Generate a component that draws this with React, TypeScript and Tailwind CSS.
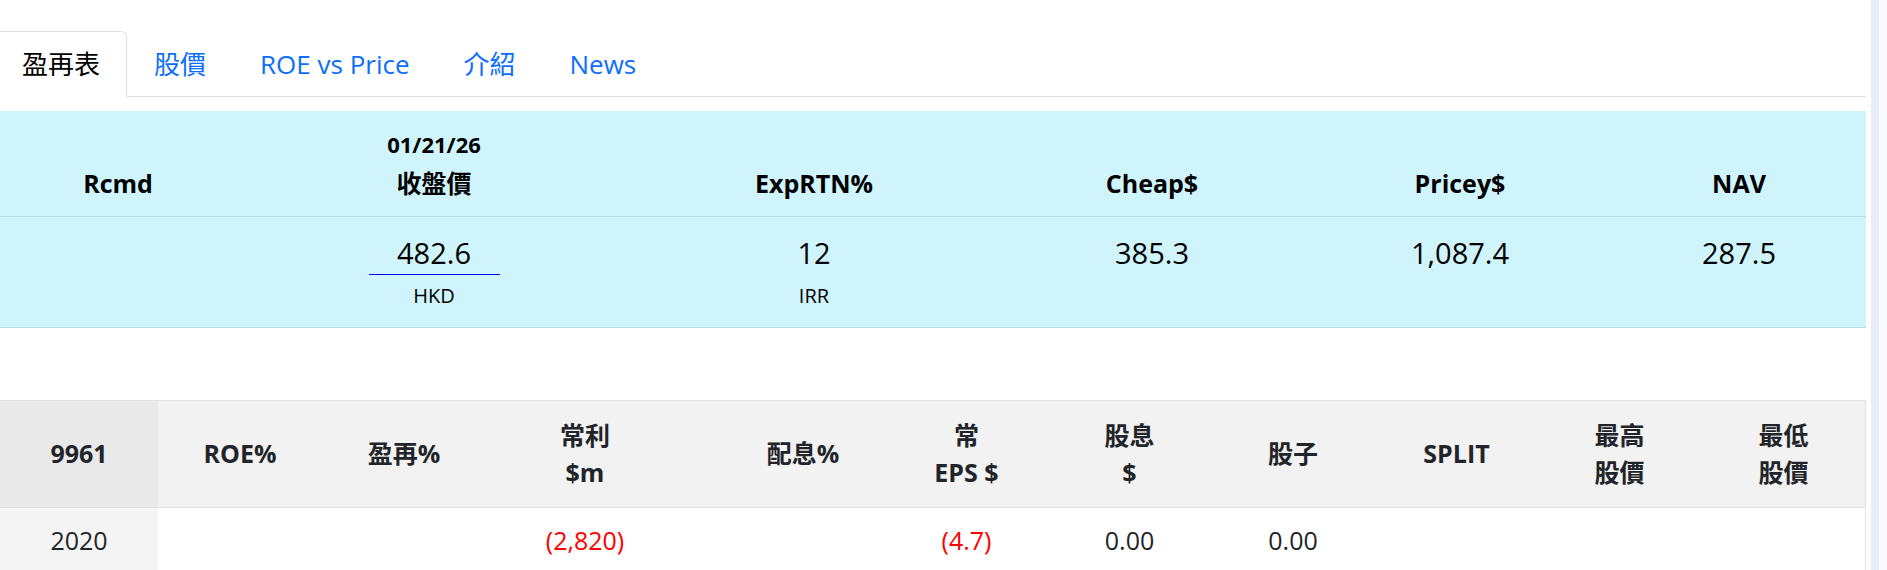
import React from "react";

// ── 상수 ──────────────────────────────────────────────────────────
const TABS = ["盈再表", "股價", "ROE vs Price", "介紹", "News"] as const;

type Col = { head: string[]; cls: string; value?: string; red?: boolean };

const HIST_COLS: Col[] = [
  { head: ["9961"], cls: "bg-[#e9e9e9]", value: "2020" },
  { head: ["ROE%"], cls: "" },
  { head: ["盈再%"], cls: "pr-[8px]" },
  { head: ["常利", "$m"], cls: "pr-[18px]", value: "(2,820)", red: true },
  { head: ["配息%"], cls: "pl-[27px]" },
  { head: ["常", "EPS $"], cls: "", value: "(4.7)", red: true },
  { head: ["股息", "$"], cls: "", value: "0.00" },
  { head: ["股子"], cls: "", value: "0.00" },
  { head: ["SPLIT"], cls: "" },
  { head: ["最高", "股價"], cls: "" },
  { head: ["最低", "股價"], cls: "" },
];

export default function App() {
  return (
    <div className="flex h-[570px] w-[1887px] overflow-hidden bg-white font-['Open_Sans','Noto_Sans_CJK_TC',sans-serif]">
      <div className="w-[1866px] shrink-0">
        {/* 탭 */}
        <div className="flex border-b border-[#dee2e6] pt-[31px]">
          <div className="-mb-px -ml-[5px] flex">
            {TABS.map((t, i) => (
              <div
                key={t}
                className={`h-[66px] rounded-t-[6px] border px-[26px] py-[13px] text-[26px] leading-[38px] ${
                  i === 0
                    ? "border-[#dee2e6] border-b-white bg-white text-black"
                    : "border-transparent text-[#0d6efd]"
                }`}
              >
                {t}
              </div>
            ))}
          </div>
        </div>

        {/* 요약 패널 */}
        <div className="mt-[14px] bg-[#cff4fc] text-black">
          <div className="grid h-[106px] grid-cols-[236px_396px_364px_312px_304px_254px] items-end border-b border-[#badce3] pb-[14px] text-center text-[25px] font-bold leading-[37px]">
            <div>Rcmd</div>
            <div>
              <div className="text-[22px] leading-[41px]">01/21/26</div>
              <div>收盤價</div>
            </div>
            <div>ExpRTN%</div>
            <div>Cheap$</div>
            <div>Pricey$</div>
            <div>NAV</div>
          </div>
          <div className="grid h-[111px] grid-cols-[236px_396px_364px_312px_304px_254px] items-start border-b border-[#badce3] pt-[14px] text-center">
            <div />
            <div className="flex flex-col items-center">
              <span className="inline-block w-[131px] border-b border-[#0000ff] text-[29px] leading-[43px]">
                482.6
              </span>
              <span className="mt-[6px] text-[20px] leading-[30px]">HKD</span>
            </div>
            <div className="flex flex-col items-center">
              <span className="text-[29px] leading-[43px]">12</span>
              <span className="mt-[7px] text-[20px] leading-[30px]">IRR</span>
            </div>
            <div className="text-[29px] leading-[43px]">385.3</div>
            <div className="text-[29px] leading-[43px]">1,087.4</div>
            <div className="text-[29px] leading-[43px]">287.5</div>
          </div>
        </div>

        {/* 연도별 표 */}
        <div className="mt-[72px] border-r border-t border-[#dee2e6] text-[25px] leading-[37.5px] text-[#212529]">
          <div className="grid h-[107px] grid-cols-[158px_164px_172px_200px_191px_163px_163px_164px_163px_163px_165px] border-b border-[#dee2e6] bg-[#f2f2f2] font-bold">
            {HIST_COLS.map((c, i) => (
              <div key={i} className={`flex flex-col items-center justify-center ${c.cls}`}>
                {c.head.map((h) => (
                  <span key={h}>{h}</span>
                ))}
              </div>
            ))}
          </div>
          <div className="grid h-[80px] grid-cols-[158px_164px_172px_200px_191px_163px_163px_164px_163px_163px_165px]">
            {HIST_COLS.map((c, i) => (
              <div
                key={i}
                className={`pt-[14px] text-center ${i === 0 ? "bg-[#f4f4f4]" : c.cls} ${
                  c.red ? "text-[#ff0000]" : ""
                }`}
              >
                {c.value ?? ""}
              </div>
            ))}
          </div>
        </div>
      </div>

      {/* 스크롤바 */}
      <div className="ml-[5px] flex">
        <div className="w-[8px] bg-[#e9edf8]" />
        <div className="w-[8px] bg-[#f8f9fc]" />
      </div>
    </div>
  );
}
